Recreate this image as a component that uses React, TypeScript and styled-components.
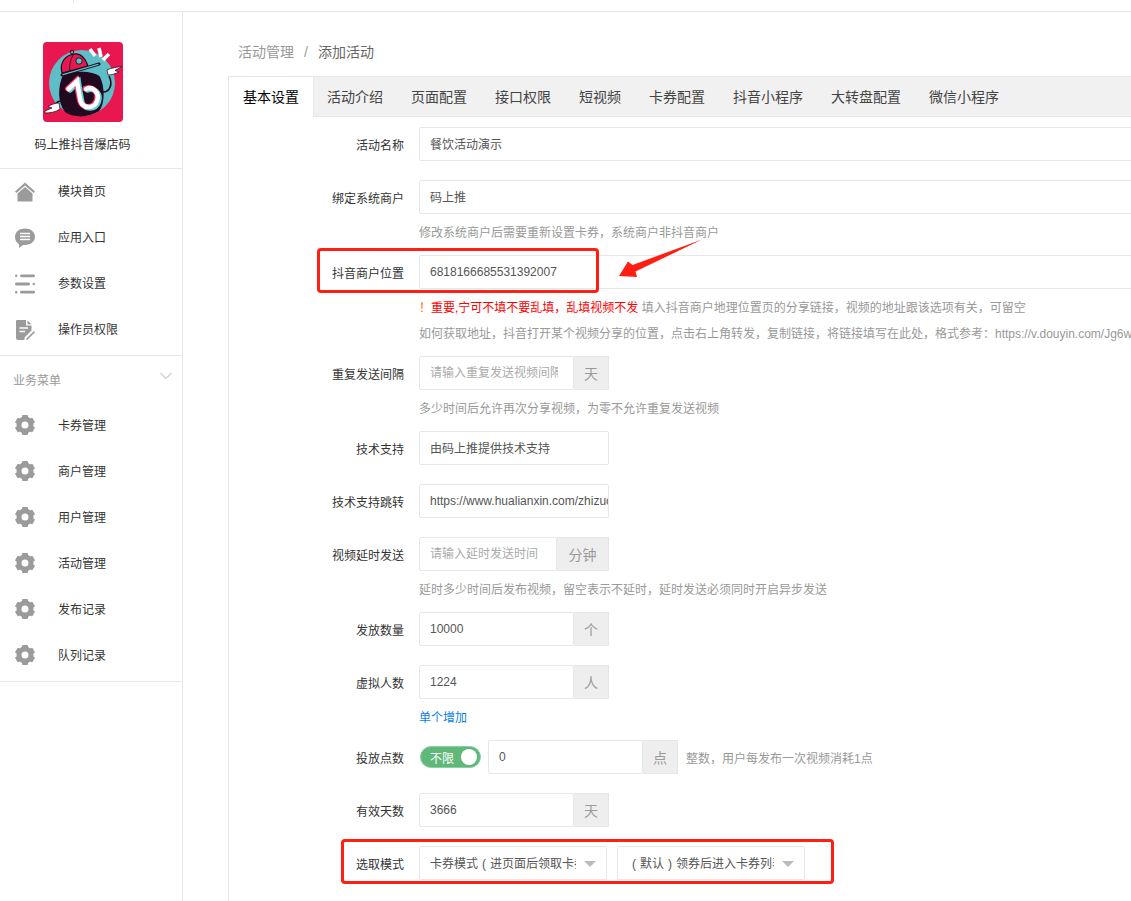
import React from "react";
import styled, { createGlobalStyle } from "styled-components";

const Global = createGlobalStyle`
  html, body { margin: 0; padding: 0; background: #fff; }
  * { box-sizing: border-box; }
  body { font-family: "Liberation Sans", "Noto Sans CJK SC", sans-serif; font-size: 12px; color: #333; }
`;

const Page = styled.div`
  position: relative;
  width: 1131px;
  height: 901px;
  overflow: hidden;
  display: flex;
  flex-direction: column;
`;
const TopBar = styled.header`
  height: 12px;
  flex: none;
  padding-left: 73px;
  border-bottom: 1px solid #e7e7e7;
`;
const TopTick = styled.span`
  display: block;
  width: 1px;
  height: 3px;
  background: #e7e7e7;
`;
const Body = styled.div`
  flex: 1;
  display: flex;
  min-height: 0;
`;
const Sidebar = styled.aside`
  width: 183px;
  flex: none;
  border-right: 1px solid #e7e7e7;
`;
const Brand = styled.div`
  height: 157px;
  padding: 30px 17px 0 0;
  border-bottom: 1px solid #e7e7e7;
  display: flex;
  flex-direction: column;
  align-items: center;
`;
const LogoSvg = styled.svg`
  width: 80px;
  height: 80px;
  margin-left: 1px;
  display: block;
`;
const BrandName = styled.div`
  margin-top: 14px;
  line-height: 18px;
  color: #333;
`;
const NavList = styled.nav<{ $pad: number }>`
  display: flex;
  flex-direction: column;
  gap: 4px;
  padding-bottom: ${(p) => p.$pad}px;
  border-bottom: 1px solid #e7e7e7;
`;
const NavItem = styled.a`
  height: 42px;
  display: flex;
  align-items: center;
  padding-left: 15px;
  color: #333;
`;
const NavIcon = styled.svg<{ $dy: number }>`
  width: 20px;
  height: 20px;
  flex: none;
  margin: ${(p) => p.$dy}px 23px 0 0;
  fill: #9b9b9b;
`;
const SectionHead = styled.div`
  height: 48px;
  padding: 0 10px 0 13px;
  display: flex;
  align-items: center;
  justify-content: space-between;
  color: #999;
  margin-top: -1px;
`;
const Chevron = styled.svg`
  width: 12px;
  height: 8px;
  margin-top: -6px;
  fill: none;
  stroke: #aaa;
  stroke-width: 1;
`;
const Main = styled.main`
  flex: 1;
  min-width: 0;
  padding: 30px 0 0 45px;
`;
const Crumbs = styled.div`
  height: 20px;
  line-height: 20px;
  padding-left: 10px;
  margin-bottom: 14px;
  font-size: 14px;
  color: #666;
`;
const CrumbMuted = styled.span`
  color: #999;
`;
const CrumbSep = styled.span`
  color: #999;
  margin: 0 10px;
  font-size: 14px;
`;
const Panel = styled.section`
  width: 1100px;
  min-height: 900px;
  border-top: 1px solid #e7e7e7;
  border-left: 1px solid #e7e7e7;
`;
const Tabs = styled.div`
  height: 40px;
  display: flex;
  background: #f1f1f1;
  border-bottom: 1px solid #e7e7e7;
`;
const Tab = styled.div<{ $active?: boolean }>`
  height: ${(p) => (p.$active ? "40px" : "39px")};
  line-height: 40px;
  padding: 0 14px;
  font-size: 14px;
  color: ${(p) => (p.$active ? "#000" : "#444")};
  background: ${(p) => (p.$active ? "#fff" : "transparent")};
  box-shadow: ${(p) => (p.$active ? "1px 0 0 #e7e7e7" : "none")};
`;
const Form = styled.div`
  padding-top: 10px;
`;
const Group = styled.div`
  display: flex;
  padding-bottom: 13px;
`;
const Label = styled.label`
  width: 175px;
  flex: none;
  text-align: right;
  line-height: 38px;
  color: #333;
`;
const Controls = styled.div`
  margin-left: 15px;
  flex: 1;
  min-width: 0;
`;
const ControlRow = styled.div`
  display: flex;
  align-items: center;
  margin-bottom: 6px;
  height: 34px;
`;
const TextField = styled.input<{ $w: number; $pr?: number; $pb?: number }>`
  width: ${(p) => p.$w}px;
  height: 34px;
  flex: none;
  padding: 0 ${(p) => p.$pr ?? 10}px ${(p) => p.$pb ?? 2}px 10px;
  border: 1px solid #e7e7e7;
  border-radius: 2px;
  outline: none;
  font: inherit;
  color: #555;
  background: #fff;
  &::placeholder { color: #aaa; opacity: 1; }
`;
const Addon = styled.span<{ $w?: number }>`
  width: ${(p) => p.$w ?? 35}px;
  height: 34px;
  flex: none;
  display: flex;
  align-items: center;
  justify-content: center;
  background: #eee;
  border: 1px solid #e7e7e7;
  border-left: none;
  font-size: 14px;
  color: #999;
`;
const Help = styled.div`
  margin-top: 8px;
  height: 20px;
  line-height: 22px;
  white-space: nowrap;
  color: #999;
  & + & { margin-top: 6px; }
`;
const Warn = styled.span`
  color: #ff6a00;
`;
const Danger = styled.span`
  color: #f00;
`;
const TextLink = styled.a`
  color: #0b7fe3;
`;
const Switch = styled.div`
  width: 61px;
  height: 22px;
  flex: none;
  margin: 0 7px 0 1px;
  padding: 0 3px 0 9px;
  display: flex;
  align-items: center;
  justify-content: space-between;
  border-radius: 11px;
  border: 1px solid #8fcea3;
  background: #5fb878;
  color: #fff;
`;
const Knob = styled.i`
  width: 16px;
  height: 16px;
  border-radius: 50%;
  background: #fff;
`;
const InlineHelp = styled.span`
  margin-left: 8px;
  color: #999;
  white-space: nowrap;
`;
const Select = styled.div`
  position: relative;
  width: 188px;
  height: 34px;
  flex: none;
  margin-right: 10px;
  padding: 0 30px 2px 10px;
  display: flex;
  align-items: center;
  border: 1px solid #e7e7e7;
  border-radius: 2px;
  color: #555;
  &::after {
    content: "";
    position: absolute;
    right: 10px;
    top: 14px;
    border: 6px solid transparent;
    border-top: 6px solid #bbb;
    border-bottom: none;
  }
`;
const SelectText = styled.span`
  display: block;
  overflow: hidden;
  white-space: nowrap;
  word-spacing: 0.67px;
`;
const Callout = styled.div<{ $x: number; $y: number; $w: number; $h: number }>`
  position: absolute;
  left: ${(p) => p.$x}px;
  top: ${(p) => p.$y}px;
  width: ${(p) => p.$w}px;
  height: ${(p) => p.$h}px;
  border: 3px solid #fe1e12;
  border-radius: 4px;
  pointer-events: none;
`;
const ArrowSvg = styled.svg`
  position: absolute;
  left: 0;
  top: 0;
  width: 1131px;
  height: 901px;
  pointer-events: none;
`;

const NOTE = "M25.5 47 L34 39 C35 46 36.5 54 37.5 59 C40 67 51 67 54 59 C57 51 50 44 43 47";

const Logo = () => (
  <LogoSvg viewBox="0 0 80 80">
    <rect width="80" height="80" rx="4" fill="#e8174f" />
    <circle cx="39" cy="41" r="33" fill="#5fbdc7" />
    <path d="M17 59 C13 60 12 62 13 66 M60 50 C67 50 70 42 66 34" fill="none" stroke="#1c0a1c" strokeWidth="1.6" />
    <path d="M20 33 C30 29 50 28 57 35 C62 45 62 62 56 69 C46 76 30 76 22 70 C14 60 15 44 20 33Z" fill="#22091f" />
    <path d="M19 31 C16 20 23 13 31 12 C37 11 42 15 45 24Z" fill="#e8174f" stroke="#1c0a1c" strokeWidth="1.2" />
    <path d="M31 12 C27 17 26 24 27 29" fill="none" stroke="#1c0a1c" strokeWidth="0.9" />
    <circle cx="29" cy="10" r="1.8" fill="none" stroke="#1c0a1c" strokeWidth="0.9" />
    <circle cx="36" cy="19" r="3.2" fill="#5fbdc7" stroke="#1c0a1c" strokeWidth="0.9" />
    <path d="M19 33 L56 22" stroke="#1c0a1c" strokeWidth="3" strokeLinecap="round" />
    <path d="M20 32.6 L55 22.3" stroke="#5fbdc7" strokeWidth="1.3" strokeLinecap="round" />
    <path d="M47 7 L52 14 M56 6 L58 15 M66 12 L60 18" stroke="#fff" strokeWidth="3.6" />
    <path d="M64 28 C68 26 74 25 79 24.5 L72 28.5 L76 30 C72 32 68 33 65 33Z" fill="#fff" stroke="#1c0a1c" strokeWidth="0.7" />
    <path d="M2 69 L9 66 L5 64.5 C9 62 13 61 16 61 L17 67 C13 70 7 71 2 71Z" fill="#fff" stroke="#1c0a1c" strokeWidth="0.7" />
    <g fill="none" strokeWidth="5.4" strokeLinecap="round">
      <path d={NOTE} stroke="#5fd3d6" transform="translate(1.4 1)" />
      <path d={NOTE} stroke="#ff2d63" transform="translate(-0.8 -0.4)" />
      <path d={NOTE} stroke="#fff" strokeWidth="4.6" />
    </g>
  </LogoSvg>
);

const HomeIcon = () => (
  <NavIcon $dy={4} viewBox="0 0 20 20">
    <path d="M10 0.5 L20 9.5 L18.6 11 L10 3.4 L1.4 11 L0 9.5Z" />
    <path d="M10 5 L17.5 11.5 V19.5 H2.5 V11.5Z" />
  </NavIcon>
);
const ChatIcon = () => (
  <NavIcon $dy={3} viewBox="0 0 20 20">
    <path d="M10 0.5 C15.5 0.5 20 3.8 20 8.8 C20 13.8 15.5 17 10 17 H8 L4 20 V16.2 C1.5 14.8 0 12 0 8.8 C0 3.8 4.5 0.5 10 0.5Z" />
    <path d="M5 5.5 H15 M5 8.5 H15 M5 11.5 H15" stroke="#fff" strokeWidth="1.3" />
  </NavIcon>
);
const ListIcon = () => (
  <NavIcon $dy={4} viewBox="0 0 20 20">
    <circle cx="1.2" cy="1.8" r="1.2" />
    <rect x="5" y="0.4" width="15" height="2.8" rx="1.4" />
    <rect x="0" y="8.6" width="15" height="2.8" rx="1.4" />
    <circle cx="18.8" cy="10" r="1.2" />
    <circle cx="1.2" cy="18.2" r="1.2" />
    <rect x="5" y="16.8" width="15" height="2.8" rx="1.4" />
  </NavIcon>
);
const DocIcon = () => (
  <NavIcon $dy={4} viewBox="0 0 20 20">
    <path d="M2 0 H11 V5.5 H16.5 V10.5 L9.5 17.5 V20 H3 Q1 20 1 18 V1 Q1 0 2 0Z" />
    <path d="M12.5 0.5 L16.5 4.2 H12.5Z" />
    <path d="M4.5 8 H13 M4.5 11.5 H10" stroke="#fff" strokeWidth="1.5" />
    <path d="M11.5 19.5 L19.5 11.5" stroke="#9b9b9b" strokeWidth="1.6" fill="none" />
  </NavIcon>
);
const GearIcon = () => (
  <NavIcon $dy={2} viewBox="0 0 20 20">
    <circle cx="10" cy="10" r="6" fill="none" stroke="#9b9b9b" strokeWidth="5" />
    {[0, 60, 120, 180, 240, 300].map((a) => (
      <rect key={a} x="7" y="0" width="6" height="4" rx="1" transform={`rotate(${a} 10 10)`} />
    ))}
  </NavIcon>
);

const topMenu = [
  { icon: <HomeIcon />, text: "模块首页" },
  { icon: <ChatIcon />, text: "应用入口" },
  { icon: <ListIcon />, text: "参数设置" },
  { icon: <DocIcon />, text: "操作员权限" },
];
const bizMenu = ["卡券管理", "商户管理", "用户管理", "活动管理", "发布记录", "队列记录"];
const tabs = ["基本设置", "活动介绍", "页面配置", "接口权限", "短视频", "卡券配置", "抖音小程序", "大转盘配置", "微信小程序"];

const Row = ({ label, children, help }: { label: string; children: React.ReactNode; help?: React.ReactNode }) => (
  <Group>
    <Label>{label}</Label>
    <Controls>
      <ControlRow>{children}</ControlRow>
      {help}
    </Controls>
  </Group>
);

export default function App() {
  return (
    <Page>
      <Global />
      <TopBar>
        <TopTick />
      </TopBar>
      <Body>
        <Sidebar>
          <Brand>
            <Logo />
            <BrandName>码上推抖音爆店码</BrandName>
          </Brand>
          <NavList $pad={6}>
            {topMenu.map((m) => (
              <NavItem key={m.text}>
                {m.icon}
                {m.text}
              </NavItem>
            ))}
          </NavList>
          <SectionHead>
            业务菜单
            <Chevron viewBox="0 0 12 8">
              <path d="M0.5 1 L6 6.5 L11.5 1" />
            </Chevron>
          </SectionHead>
          <NavList $pad={6}>
            {bizMenu.map((t) => (
              <NavItem key={t}>
                <GearIcon />
                {t}
              </NavItem>
            ))}
          </NavList>
        </Sidebar>
        <Main>
          <Crumbs>
            <CrumbMuted>活动管理</CrumbMuted>
            <CrumbSep>/</CrumbSep>
            添加活动
          </Crumbs>
          <Panel>
            <Tabs>
              {tabs.map((t, i) => (
                <Tab key={t} $active={i === 0}>
                  {t}
                </Tab>
              ))}
            </Tabs>
            <Form>
              <Row label="活动名称">
                <TextField $w={800} readOnly value="餐饮活动演示" />
              </Row>
              <Row label="绑定系统商户" help={<Help>修改系统商户后需要重新设置卡券，系统商户非抖音商户</Help>}>
                <TextField $w={800} readOnly value="码上推" />
              </Row>
              <Row
                label="抖音商户位置"
                help={
                  <>
                    <Help>
                      <Warn>！</Warn>
                      <Danger>重要,宁可不填不要乱填，乱填视频不发</Danger> 填入抖音商户地理位置页的分享链接，视频的地址跟该选项有关，可留空
                    </Help>
                    <Help>如何获取地址，抖音打开某个视频分享的位置，点击右上角转发，复制链接，将链接填写在此处，格式参考：https://v.douyin.com/Jg6wXXX/</Help>
                  </>
                }
              >
                <TextField $w={800} $pb={1} readOnly value="6818166685531392007" />
              </Row>
              <Row label="重复发送间隔" help={<Help>多少时间后允许再次分享视频，为零不允许重复发送视频</Help>}>
                <TextField $w={155} $pr={15} $pb={0} readOnly placeholder="请输入重复发送视频间隔" />
                <Addon>天</Addon>
              </Row>
              <Row label="技术支持">
                <TextField $w={190} readOnly value="由码上推提供技术支持" />
              </Row>
              <Row label="技术支持跳转">
                <TextField $w={190} $pr={0} $pb={0} readOnly value="https://www.hualianxin.com/zhizuo" />
              </Row>
              <Row label="视频延时发送" help={<Help>延时多少时间后发布视频，留空表示不延时，延时发送必须同时开启异步发送</Help>}>
                <TextField $w={138} $pb={0} readOnly placeholder="请输入延时发送时间" />
                <Addon $w={52}>分钟</Addon>
              </Row>
              <Row label="发放数量">
                <TextField $w={155} $pb={0} readOnly value="10000" />
                <Addon>个</Addon>
              </Row>
              <Row
                label="虚拟人数"
                help={
                  <Help>
                    <TextLink>单个增加</TextLink>
                  </Help>
                }
              >
                <TextField $w={155} $pb={0} readOnly value="1224" />
                <Addon>人</Addon>
              </Row>
              <Row label="投放点数">
                <Switch>
                  不限
                  <Knob />
                </Switch>
                <TextField $w={155} $pb={0} readOnly value="0" />
                <Addon>点</Addon>
                <InlineHelp>整数，用户每发布一次视频消耗1点</InlineHelp>
              </Row>
              <Row label="有效天数">
                <TextField $w={155} $pb={0} readOnly value="3666" />
                <Addon>天</Addon>
              </Row>
              <Row label="选取模式">
                <Select>
                  <SelectText>卡券模式 ( 进页面后领取卡券 )</SelectText>
                </Select>
                <Select>
                  <SelectText>{"\u00a0( 默认 ) 领券后进入卡券列表"}</SelectText>
                </Select>
              </Row>
            </Form>
          </Panel>
        </Main>
      </Body>
      <Callout $x={317} $y={248} $w={282} $h={45} />
      <Callout $x={341} $y={839} $w={493} $h={45} />
      <ArrowSvg viewBox="0 0 1131 901">
        <polygon points="619,276 628,261.5 632.5,265 702,239.5 635.5,271.5 637,277" fill="#fe1e12" />
      </ArrowSvg>
    </Page>
  );
}
